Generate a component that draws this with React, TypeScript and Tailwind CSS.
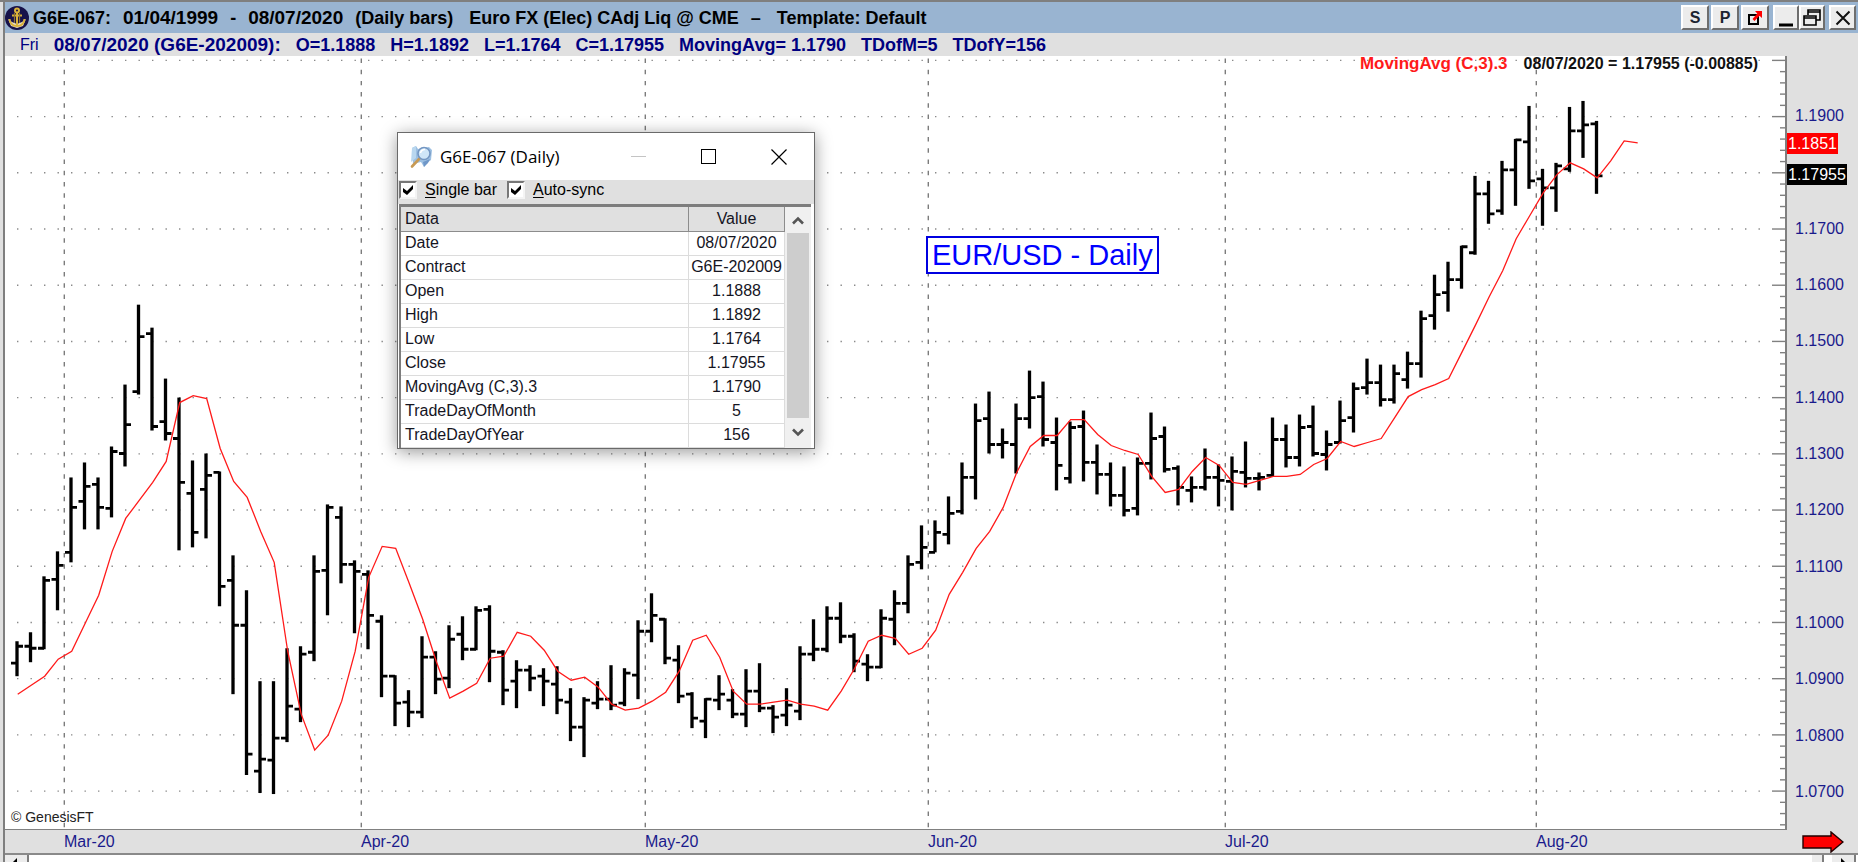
import { useState } from "react";

// open, high, low, close as levels on the plot, oldest bar first
const BARS: number[][] = [
  [664, 642, 677, 647], [647, 633, 663, 649], [649, 577, 650, 581], [580, 552, 611, 566], [553, 478, 563, 508],
  [502, 463, 530, 487], [485, 478, 530, 508], [509, 447, 518, 452], [454, 385, 467, 425], [392, 305, 395, 337],
  [334, 328, 431, 427], [422, 379, 441, 434], [439, 398, 551, 483], [494, 461, 548, 533], [490, 454, 539, 476],
  [473, 472, 607, 587], [581, 556, 695, 626], [626, 591, 776, 755], [772, 682, 794, 760], [761, 682, 795, 739],
  [739, 649, 743, 707], [710, 647, 723, 655], [653, 556, 662, 572], [571, 505, 616, 508], [518, 507, 584, 565],
  [565, 561, 634, 572], [575, 571, 650, 616], [622, 616, 698, 677], [677, 676, 727, 704], [703, 691, 728, 713],
  [713, 637, 719, 658], [658, 652, 695, 680], [679, 626, 689, 640], [635, 617, 661, 650], [650, 607, 651, 611],
  [610, 606, 683, 652], [653, 651, 706, 691], [682, 661, 709, 671], [671, 666, 692, 679], [677, 669, 707, 682],
  [685, 667, 715, 701], [703, 689, 742, 728], [728, 698, 758, 701], [704, 682, 710, 700], [700, 666, 711, 706],
  [704, 669, 707, 674], [676, 621, 700, 632], [632, 594, 643, 616], [620, 619, 665, 659], [661, 646, 704, 697],
  [695, 693, 729, 719], [722, 699, 739, 700], [701, 676, 711, 695], [701, 690, 719, 715], [715, 670, 728, 692],
  [692, 664, 713, 709], [709, 706, 734, 718], [716, 689, 727, 706], [712, 647, 721, 655], [655, 620, 662, 650],
  [650, 607, 653, 619], [619, 603, 644, 637], [637, 634, 673, 662], [665, 655, 682, 668], [668, 610, 669, 619],
  [620, 591, 646, 604], [604, 556, 614, 565], [563, 526, 570, 548], [553, 521, 553, 533], [535, 497, 545, 514],
  [512, 463, 515, 478], [478, 404, 500, 421], [419, 392, 454, 445], [445, 429, 459, 443], [445, 404, 474, 419],
  [419, 371, 429, 398], [397, 382, 447, 440], [443, 418, 491, 466], [479, 422, 484, 428], [427, 411, 482, 463],
  [463, 445, 495, 475], [475, 463, 507, 496], [496, 467, 517, 511], [509, 458, 516, 464], [464, 413, 480, 439],
  [437, 427, 473, 470], [469, 466, 506, 488], [491, 477, 503, 488], [488, 449, 491, 478], [478, 465, 507, 481],
  [482, 457, 511, 472], [473, 442, 488, 479], [479, 473, 491, 478], [476, 418, 477, 440], [440, 425, 468, 458],
  [458, 415, 467, 428], [427, 406, 457, 454], [455, 431, 471, 445], [443, 401, 444, 421], [418, 383, 433, 389],
  [388, 359, 395, 383], [383, 365, 407, 400], [400, 365, 404, 374], [380, 352, 389, 364], [364, 311, 378, 319],
  [316, 275, 330, 295], [293, 262, 312, 280], [280, 246, 289, 247], [253, 176, 255, 194], [194, 181, 224, 214],
  [211, 161, 215, 170], [170, 139, 206, 140], [142, 106, 189, 181], [179, 169, 226, 188], [188, 163, 212, 166],
  [169, 107, 172, 131], [131, 101, 158, 125], [124, 121, 194, 176],
];

const MOVING_AVG = [
  695, 686, 677, 660, 652, 624, 596, 552, 519, 501, 483, 462, 403, 396, 399, 449, 482, 498, 532, 563,
  652, 715, 751, 736, 702, 652, 578, 547, 549, 584, 620, 662, 699, 692, 684, 659, 657, 633, 637, 651,
  672, 681, 678, 688, 705, 711, 709, 702, 693, 672, 641, 636, 658, 692, 705, 705, 703, 701, 705, 707,
  711, 692, 669, 642, 636, 639, 655, 649, 631, 595, 573, 549, 532, 508, 473, 447, 436, 436, 420, 420,
  435, 446, 451, 455, 477, 493, 490, 472, 458, 466, 483, 485, 481, 477, 477, 475, 465, 459, 442, 447,
  443, 439, 418, 397, 390, 385, 379, 352, 325, 297, 271, 239, 216, 193, 175, 163, 169, 178, 161, 141, 143,
];

const STEP = 13.5;
const FIRST_X = 17;
const TOP_LEVEL = 60.4;
const LEVEL_GAP = 56.28;

const MONTH_LINES = [64, 361, 645, 928, 1225, 1536];
const MONTHS = ["Mar-20", "Apr-20", "May-20", "Jun-20", "Jul-20", "Aug-20"];

const PRICES = [
  "1.1900", "1.17955", "1.1700", "1.1600", "1.1500", "1.1400", "1.1300",
  "1.1200", "1.1100", "1.1000", "1.0900", "1.0800", "1.0700",
];

const ROWS = [
  ["Date", "08/07/2020"],
  ["Contract", "G6E-202009"],
  ["Open", "1.1888"],
  ["High", "1.1892"],
  ["Low", "1.1764"],
  ["Close", "1.17955"],
  ["MovingAvg (C,3).3", "1.1790"],
  ["TradeDayOfMonth", "5"],
  ["TradeDayOfYear", "156"],
];

const toolButton =
  "flex h-[25px] items-center justify-center border-2 border-t-white border-l-white border-r-[#6e6e6e] border-b-[#6e6e6e] bg-[#ececec] text-base font-bold text-[#1c2430]";

function AnchorLogo() {
  return (
    <svg width="24" height="24" viewBox="0 0 24 24" className="shrink-0">
      <circle cx="12" cy="12" r="12" fill="#17124a" />
      <path d="M3 13 L6 20 L12 22 L18 20 L21 13 L17 16 L12 18 L7 16 Z" fill="#e9dfc4" />
      <g fill="none" stroke="#d9b23a" strokeWidth="2">
        <circle cx="12" cy="4.5" r="2" />
        <path d="M12 6.500V20M7 9.500H17M4.500 13C5 18 8.500 20 12 20S19 18 19.500 13" />
      </g>
      <path d="M9.500 7V17M14.500 7V17" stroke="#8f7430" strokeWidth="1.200" />
    </svg>
  );
}

function LensIcon() {
  return (
    <svg width="24" height="24" viewBox="0 0 24 24" className="shrink-0">
      <path d="M2 3L6 1L8 4L19 2L22 5L21 15L17 18L14 22L11 17L3 19Z" fill="#9dc0e2" />
      <path d="M2 3L6 1L6 13L1 17Z" fill="#b9d7ef" />
      <path d="M13 17L20 14L18 18L14 22Z" fill="#6f97c8" />
      <path d="M9.500 13.500L2 21.500" stroke="#c79a55" strokeWidth="2.600" strokeLinecap="round" />
      <circle cx="14" cy="8.500" r="6" fill="#cfe6f8" stroke="#7396c2" strokeWidth="1.600" />
      <path d="M10.500 8A4 4 0 0 1 15 4.500" fill="none" stroke="#fff" strokeWidth="1.600" />
    </svg>
  );
}

function PriceChart() {
  const levels = Array.from({ length: 14 }, (_, i) => TOP_LEVEL + LEVEL_GAP * i);
  const ticks = Array.from({ length: 69 }, (_, i) => ({ y: TOP_LEVEL + (LEVEL_GAP / 5) * i, major: i % 5 === 0 }));
  const line = MOVING_AVG.map((y, i) => `${FIRST_X + 0.7 + i * STEP},${y}`).join(" ");

  return (
    <svg viewBox="5 56 1782 774" preserveAspectRatio="none" className="absolute inset-0 h-full w-full">
      {levels.map((y) => (
        <line key={y} x1="17" x2="1762" y1={y} y2={y} stroke="#8a8a8a" strokeWidth="1.4" strokeDasharray="1.4 12.1" />
      ))}
      {MONTH_LINES.map((x) => (
        <line key={x} x1={x + 0.3} x2={x + 0.3} y1="58.400" y2="830" stroke="#7c7c7c" strokeWidth="1.4" strokeDasharray="4.5 6.756" />
      ))}
      <g stroke="#808080" strokeWidth="1.4">
        {ticks.map((t) => (
          <line key={t.y} x1={t.major ? 1772 : 1780} x2="1786" y1={t.y} y2={t.y} />
        ))}
        <line x1="1786" x2="1786" y1="56" y2="830" strokeWidth="2" />
      </g>
      <g fill="none" stroke="#000">
        {BARS.map(([open, high, low, close], i) => {
          const x = FIRST_X + i * STEP;
          return (
            <g key={i}>
              <path d={`M${x} ${high}V${low}`} strokeWidth="3.3" />
              <path d={`M${x - 6} ${open}H${x}M${x} ${close}H${x + 6}`} strokeWidth="2.8" />
            </g>
          );
        })}
      </g>
      <polyline points={line} fill="none" stroke="#ff1a1a" strokeWidth="1.3" />
    </svg>
  );
}

function DataWindow() {
  const [singleBar, setSingleBar] = useState(true);
  const [autoSync, setAutoSync] = useState(true);

  const options = [
    { id: "single-bar", label: "Single bar", value: singleBar, set: setSingleBar },
    { id: "auto-sync", label: "Auto-sync", value: autoSync, set: setAutoSync },
  ];

  return (
    <section className="absolute top-[76px] left-[392px] w-[418px] border border-[#6a6a6a] bg-white shadow-[0_3px_16px_rgba(0,0,0,0.4)]">
      <header className="flex h-[47px] items-center pl-3">
        <LensIcon />
        <h2 className="ml-1.5 flex-1 font-['Open_Sans',sans-serif] text-[17px] whitespace-nowrap">G6E-067 (Daily)</h2>
        <div className="flex">
          <button aria-label="Minimize" disabled className="flex w-[70px] items-center justify-center">
            <svg width="16" height="16"><path d="M0 7.500H15" stroke="#c4c4c4" /></svg>
          </button>
          <button aria-label="Maximize" className="flex w-[70px] items-center justify-center">
            <svg width="16" height="16"><rect x="0.5" y="0.5" width="14" height="14" fill="none" stroke="#000" /></svg>
          </button>
          <button aria-label="Close" className="flex w-[70px] items-center justify-center">
            <svg width="16" height="16"><path d="M0.500 0.500L15.500 15.500M15.500 0.500L0.500 15.500" stroke="#000" strokeWidth="1.2" /></svg>
          </button>
        </div>
      </header>

      <div className="flex h-6 items-start gap-2.5 bg-[#e0e0e0] pl-px">
        {options.map((o) => (
          <label key={o.id} htmlFor={o.id} className="flex items-center gap-2">
            <span className="relative flex h-[18px] w-[18px]">
              <input
                id={o.id}
                type="checkbox"
                checked={o.value}
                onChange={(e) => o.set(e.target.checked)}
                className="h-[18px] w-[18px] appearance-none border-2 border-t-[#777] border-l-[#777] border-r-[#f4f4f4] border-b-[#f4f4f4] bg-white"
              />
              {o.value && (
                <svg width="18" height="18" className="pointer-events-none absolute inset-0">
                  <path d="M4 7L8 10L14 4V8L8 14L4 11Z" fill="#000" />
                </svg>
              )}
            </span>
            <span className="leading-5">
              <u className="underline-offset-2">{o.label[0]}</u>
              {o.label.slice(1)}
            </span>
          </label>
        ))}
      </div>

      <div className="mr-[3px] ml-px flex border-t-[3px] border-l-2 border-[#7d7d7d]">
        <table className="flex-1 table-fixed border-collapse text-[#15151f]">
          <thead>
            <tr className="h-6 bg-[#e0e0e0]">
              <th className="border-r border-b border-[#8c8c8c] p-0 pl-1 text-left leading-5 font-normal">Data</th>
              <th className="w-24 border-r border-b border-[#8c8c8c] p-0 text-center leading-5 font-normal">Value</th>
            </tr>
          </thead>
          <tbody>
            {ROWS.map(([name, value]) => (
              <tr key={name} className="h-6">
                <td className="border-r border-b border-[#dcdcdc] p-0 pl-1 leading-5">{name}</td>
                <td className="border-r border-b border-[#dcdcdc] p-0 text-center leading-5">{value}</td>
              </tr>
            ))}
          </tbody>
        </table>
        <div className="flex w-[26px] flex-col bg-[#f0f0f0] px-0.5">
          <button aria-label="Scroll up" className="flex h-[26px] items-center justify-center">
            <svg width="12" height="9"><path d="M1 7.500L6 2.500L11 7.500" fill="none" stroke="#555" strokeWidth="2.600" /></svg>
          </button>
          <div className="flex-1 bg-[#cdcdcd]" />
          <button aria-label="Scroll down" className="flex h-[30px] items-center justify-center">
            <svg width="12" height="9"><path d="M1 1.500L6 6.500L11 1.500" fill="none" stroke="#555" strokeWidth="2.600" /></svg>
          </button>
        </div>
      </div>
    </section>
  );
}

export default function App() {
  return (
    <div className="flex h-screen flex-col overflow-hidden border-t-2 border-[#7f7f7f] bg-[#e0e0e0] pl-[3px] font-['Liberation_Sans',Arial,sans-serif] text-base">
      <div className="flex min-h-0 flex-1 flex-col border-l-2 border-[#7f7f7f]">
        <header className="flex h-[31px] shrink-0 items-center bg-[#99b4d1] pr-0.5">
          <AnchorLogo />
          <h1 className="ml-1 flex flex-1 items-baseline gap-3 text-lg font-bold whitespace-nowrap text-black">
            <span>G6E-067:</span>
            <span className="text-[19px]">01/04/1999</span>
            <span>-</span>
            <span className="text-[19px]">08/07/2020</span>
            <span>(Daily bars)</span>
            <span className="ml-1">Euro FX (Elec) CAdj Liq @ CME</span>
            <span>–</span>
            <span className="ml-1">Template: Default</span>
          </h1>
          <div className="flex gap-1">
            <div className="flex gap-0.5">
              <button className={`${toolButton} w-7`}>S</button>
              <button className={`${toolButton} w-7`}>P</button>
              <button aria-label="Detach" className={`${toolButton} w-7`}>
                <svg width="16" height="16" viewBox="0 0 16 16">
                  <rect x="2" y="5" width="9" height="9" fill="none" stroke="#000" strokeWidth="2" />
                  <path d="M8 1H15V8L12.500 5.800L7.500 11L5.500 9L10.300 3.600Z" fill="#f00" />
                </svg>
              </button>
            </div>
            <div className="flex">
              <button aria-label="Minimize" className={`${toolButton} w-[26px]`}>
                <svg width="16" height="18"><path d="M1 16H15" stroke="#000" strokeWidth="3" /></svg>
              </button>
              <button aria-label="Restore" className={`${toolButton} w-[26px]`}>
                <svg width="20" height="20" fill="none" stroke="#000" strokeWidth="1.6">
                  <path d="M6 7V2H18V12H14M6 4H18" />
                  <path d="M2 8H14V17H2ZM2 10H14" />
                </svg>
              </button>
            </div>
            <button aria-label="Close" className={`${toolButton} w-[27px]`}>
              <svg width="16" height="16"><path d="M1.500 1.500L14.500 14.500M14.500 1.500L1.500 14.500" stroke="#111" strokeWidth="2" /></svg>
            </button>
          </div>
        </header>

        <div className="flex h-[23px] shrink-0 items-center gap-[15px] pl-[15px] text-lg font-bold whitespace-nowrap text-[#000080]">
          <span className="text-base font-normal">Fri</span>
          <span className="text-[19px]">08/07/2020 (G6E-202009):</span>
          <span>O=1.1888</span>
          <span>H=1.1892</span>
          <span>L=1.1764</span>
          <span>C=1.17955</span>
          <span>MovingAvg= 1.1790</span>
          <span>TDofM=5</span>
          <span>TDofY=156</span>
        </div>

        <main className="flex min-h-0 flex-1">
          <div className="relative flex-1 border-b border-[#808080] bg-white">
            <PriceChart />
            <p className="absolute top-0 right-[29px] flex items-baseline gap-4 leading-4 font-bold">
              <span className="text-[17px] text-[#ff1a1a]">MovingAvg (C,3).3</span>
              <span className="text-[#111]">08/07/2020 = 1.17955 (-0.00885)</span>
            </p>
            <p className="absolute top-[180px] left-[921px] border-2 border-[#0000e0] bg-white px-1 text-[29px] leading-[34px] text-[#0000ff]">
              EUR/USD - Daily
            </p>
            <p className="absolute bottom-1 left-1.5 text-sm leading-4 text-[#222]">© GenesisFT</p>
            <DataWindow />
          </div>
          <aside className="relative flex w-[71px] shrink-0 flex-col pt-8 pb-2.5 text-[#1a1a8c]">
            {PRICES.map((p) => (
              <div key={p} className="flex flex-1 items-center">
                {p === "1.17955" ? (
                  <span className="mt-1 bg-black px-px leading-[21px] text-white">{p}</span>
                ) : (
                  <span className="pl-2">{p}</span>
                )}
              </div>
            ))}
            <span className="absolute top-[10%] left-0 bg-[#ff0000] px-px leading-[21px] text-white">1.1851</span>
          </aside>
        </main>

        <footer className="shrink-0">
          <div className="flex h-[23px] items-center">
            <div className="grid flex-1 grid-cols-[59fr_297fr_284fr_283fr_297fr_311fr_251fr] leading-5 text-[#1a1a8c]">
              {MONTHS.map((m, i) => (
                <span key={m} className={i === 0 ? "col-start-2" : ""}>{m}</span>
              ))}
            </div>
            <button aria-label="Go to last bar" className="flex w-[71px] pl-[15px]">
              <svg width="42" height="22" viewBox="0 0 42 22">
                <path d="M1 5H29V1L41 11L29 21V17H1Z" fill="#f00" stroke="#200" strokeWidth="1.400" />
              </svg>
            </button>
          </div>
          <div className="flex h-[9px] overflow-hidden border-t-2 border-[#8a8a8a] bg-white">
            <button aria-label="Scroll left" className="w-6 border-r-2 border-[#7d7d7d] bg-[#ececec]">
              <svg width="22" height="7"><path d="M8 7L12 3V7Z" fill="#000" /></svg>
            </button>
            <div className="flex-1" />
            <div className="mr-2 w-3 border-r-2 border-[#7d7d7d] bg-[#ececec]" />
            <button aria-label="Scroll right" className="mr-0.5 w-6 border-r-2 border-[#7d7d7d] bg-[#ececec]">
              <svg width="22" height="7"><path d="M9 3L13 7H9Z" fill="#000" /></svg>
            </button>
          </div>
        </footer>
      </div>
    </div>
  );
}
